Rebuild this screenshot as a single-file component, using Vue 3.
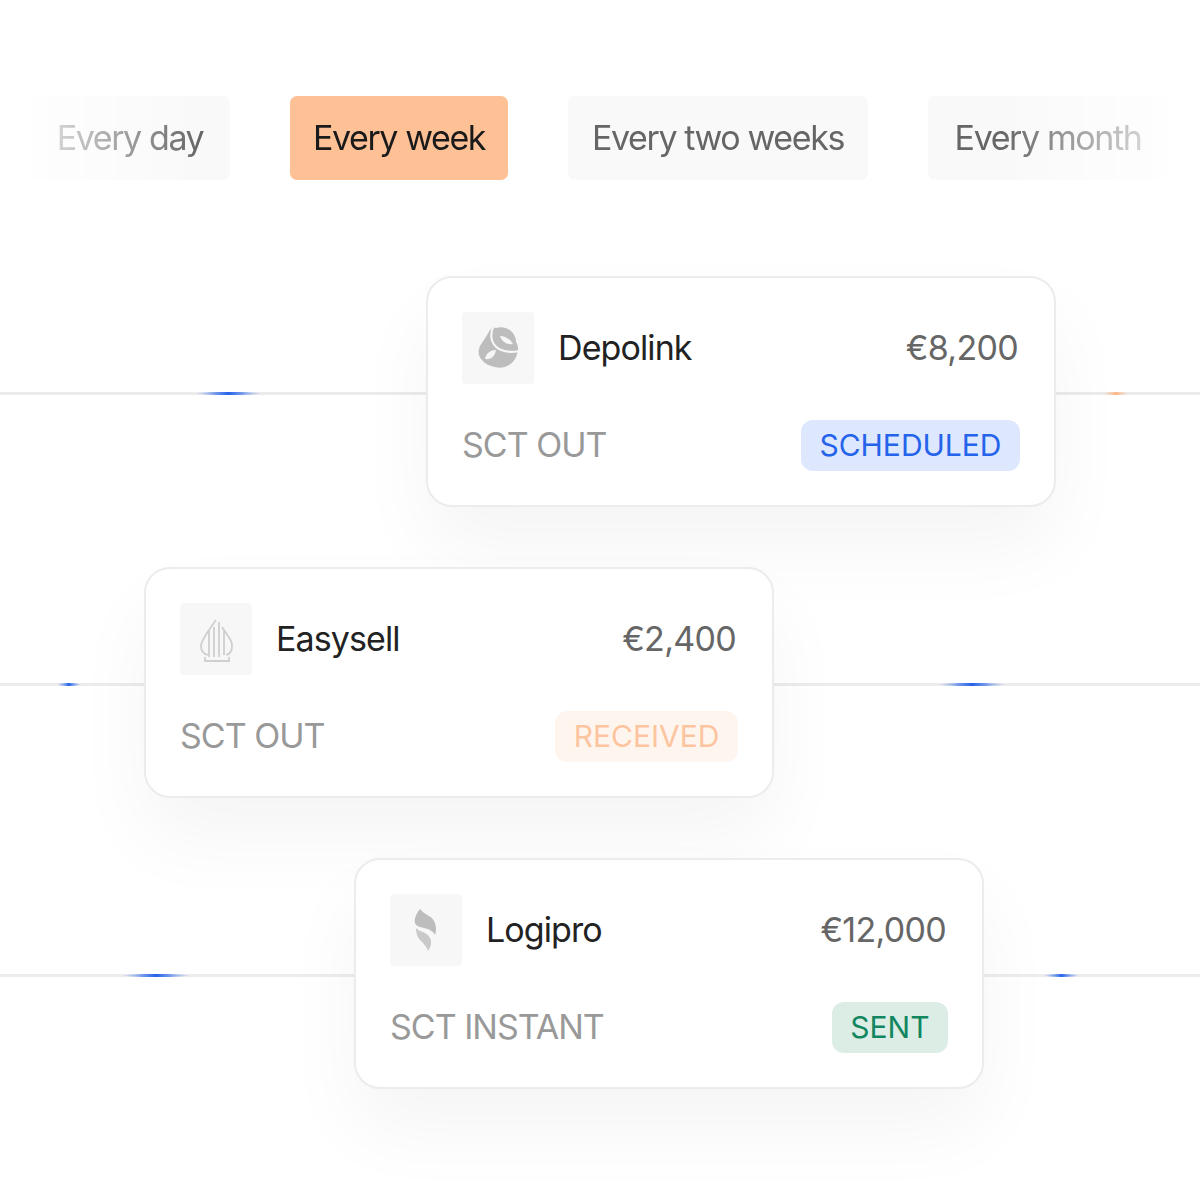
<script setup>
const periods = [
  { label: 'Every day', width: 200 },
  { label: 'Every week', width: 218, active: true },
  { label: 'Every two weeks', width: 300 },
  { label: 'Every month', width: 240 }
]

const lanes = [
  {
    name: 'Depolink',
    amount: '€8,200',
    rail: 'SCT OUT',
    status: 'SCHEDULED',
    statusClass: 'scheduled',
    offset: 'lane-a',
    logo: 'depolink',
    pulses: [
      { left: 195, width: 67, color: 'blue' },
      { left: 1103, width: 26, color: 'orange' }
    ]
  },
  {
    name: 'Easysell',
    amount: '€2,400',
    rail: 'SCT OUT',
    status: 'RECEIVED',
    statusClass: 'received',
    offset: 'lane-b',
    logo: 'easysell',
    pulses: [
      { left: 57, width: 24, color: 'blue' },
      { left: 938, width: 68, color: 'blue' }
    ]
  },
  {
    name: 'Logipro',
    amount: '€12,000',
    rail: 'SCT INSTANT',
    status: 'SENT',
    statusClass: 'sent',
    offset: 'lane-c',
    logo: 'logipro',
    pulses: [
      { left: 122, width: 68, color: 'blue' },
      { left: 1044, width: 35, color: 'blue' }
    ]
  }
]
</script>

<template>
  <div class="page">
    <div class="periods">
      <div
        v-for="p in periods"
        :key="p.label"
        class="period"
        :class="{ active: p.active }"
        :style="{ width: p.width + 'px' }"
      >{{ p.label }}</div>
    </div>

    <div class="lanes">
      <div v-for="lane in lanes" :key="lane.name" class="lane" :class="lane.offset">
        <div class="line">
          <span
            v-for="pulse in lane.pulses"
            :key="pulse.left"
            class="pulse"
            :class="pulse.color"
            :style="{ left: pulse.left + 'px', width: pulse.width + 'px' }"
          ></span>
        </div>

        <div class="card">
          <div class="card-row">
            <div class="logo">
              <svg v-if="lane.logo === 'depolink'" width="72" height="72" viewBox="0 0 72 72">
                <path fill="#bdbdbd" d="M28 18c2-3 5-3 6-2 6-2 12 0 16 4 3 3 4 7 4 10 2 3 3 8 1 12-1 5-5 10-10 12-4 2-8 2-12 1-5-1-10-3-13-7-3-3-4-7-3-11 1-4 3-6 5-9 2-3 4-7 6-10z" />
                <path fill="none" stroke="#f6f6f6" stroke-width="2.2" d="M32 13c-5 10-3 19 5 24 6 3 12 4 20 2" />
                <path fill="#f6f6f6" d="M38 24c5 0 10 3 13 8-6 1-11-2-13-8z" />
                <path fill="#f6f6f6" d="M23 47c1-6 6-9 11-9-1 6-5 10-11 9z" />
              </svg>
              <svg v-else-if="lane.logo === 'easysell'" width="72" height="72" viewBox="0 0 72 72" fill="none" stroke="#cfcfcf" stroke-width="1.8">
                <path d="M36 17 27 30c-3 5-6 9-6 13 0 5 3 8 7 9" />
                <path d="M42 24l6 9c3 4 4 7 4 10 0 5-2 8-6 9" />
                <path d="M29 28v26M34 24v30M39 19v35M44 28v24" />
                <path d="M25 54v4h24v-4M25 58h24" />
              </svg>
              <svg v-else width="72" height="72" viewBox="0 0 72 72">
                <path fill="#bdbdbd" d="M30 15c-4 5-6 10-5 14 1 3 5 4 9 5 5 1 9 3 11 7 2-6 1-12-3-17-4-3-9-5-12-9z" />
                <path fill="#c9c9c9" d="M26 34c0 6 2 10 5 13 3 3 6 6 7 10 3-4 4-9 2-13-2-4-6-6-10-7-2-1-3-2-4-3z" />
              </svg>
            </div>
            <div class="name">{{ lane.name }}</div>
            <div class="amount">{{ lane.amount }}</div>
          </div>
          <div class="card-row bottom">
            <div class="rail">{{ lane.rail }}</div>
            <div class="status" :class="lane.statusClass">{{ lane.status }}</div>
          </div>
        </div>
      </div>
    </div>
  </div>
</template>

<style>
html, body {
  background: #fff;
}
</style>

<style scoped>
.page {
  width: 1200px;
  height: 1200px;
  overflow: hidden;
  background: #fff;
  font-family: Inter, "Liberation Sans", sans-serif;
  box-sizing: border-box;
  padding-top: 96px;
}

.periods {
  display: flex;
  gap: 60px;
  padding-left: 30px;
  -webkit-mask-image: linear-gradient(90deg, transparent 0, #000 200px, #000 1000px, transparent 1200px);
  mask-image: linear-gradient(90deg, transparent 0, #000 200px, #000 1000px, transparent 1200px);
}

.period {
  height: 84px;
  flex: none;
  box-sizing: border-box;
  padding-bottom: 2px;
  display: flex;
  align-items: center;
  justify-content: center;
  border-radius: 7px;
  background: #f9f9f9;
  color: #666;
  font-size: 34px;
  letter-spacing: -1.4px;
}

.period.active {
  background: #fec196;
  color: #1a1a1a;
}

.lanes {
  margin-top: 96px;
  display: flex;
  flex-direction: column;
  gap: 60px;
}

.lane {
  position: relative;
  height: 231px;
}

.lane-a { padding-left: 426px; }
.lane-b { padding-left: 144px; }
.lane-c { padding-left: 354px; }

.line {
  position: absolute;
  left: 0;
  right: 0;
  top: 116px;
  height: 3px;
  background: #ececec;
}

.pulse {
  position: absolute;
  top: 0;
  height: 3px;
  border-radius: 50%;
}

.pulse.blue {
  background: linear-gradient(90deg, rgba(37, 99, 235, 0), #2563eb 50%, rgba(37, 99, 235, 0));
}

.pulse.orange {
  background: linear-gradient(90deg, rgba(254, 193, 150, 0), #fdb584 50%, rgba(254, 193, 150, 0));
}

.card {
  position: relative;
  width: 630px;
  height: 231px;
  box-sizing: border-box;
  padding: 34px;
  background: #fff;
  border: 2px solid #ececec;
  border-radius: 26px;
  box-shadow: 0 40px 80px rgba(0, 0, 0, 0.045);
  display: flex;
  flex-direction: column;
  gap: 36px;
}

.card-row {
  display: flex;
  align-items: center;
}

.bottom {
  justify-content: space-between;
  height: 51px;
}

.logo {
  width: 72px;
  height: 72px;
  flex: none;
  background: #f7f7f7;
  border-radius: 4px;
  margin-right: 24px;
}

.logo svg {
  display: block;
}

.name {
  flex: 1;
  padding-bottom: 2px;
  font-size: 34px;
  letter-spacing: -0.9px;
  color: #222;
}

.amount {
  padding-bottom: 2px;
  font-size: 34px;
  letter-spacing: -0.7px;
  color: #666;
  margin-right: 2px;
}

.rail {
  padding-bottom: 2px;
  font-size: 34px;
  letter-spacing: -1px;
  color: #999;
}

.status {
  height: 51px;
  box-sizing: border-box;
  padding: 0 18.5px 2px;
  display: flex;
  align-items: center;
  border-radius: 12px;
  font-size: 30px;
}

.scheduled {
  background: #dde7fd;
  color: #2563eb;
}

.received {
  background: #fff5ef;
  color: #fdc59f;
}

.sent {
  background: #dcede6;
  color: #12875f;
}
</style>
